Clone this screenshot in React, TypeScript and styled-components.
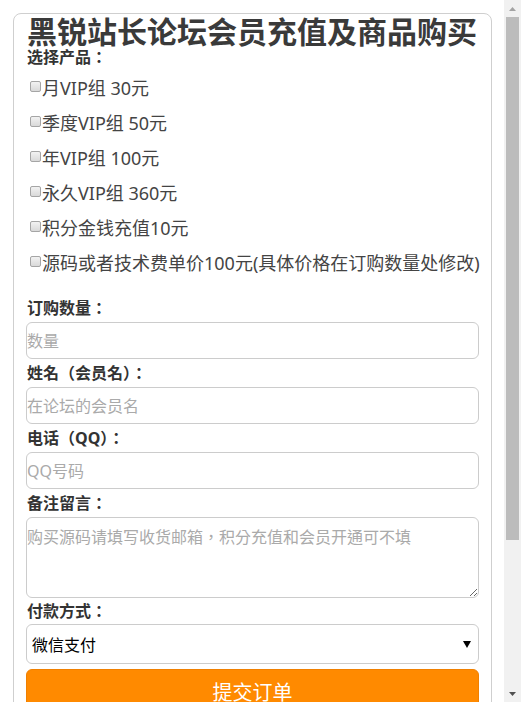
import React from "react";
import styled, { createGlobalStyle } from "styled-components";

const Global = createGlobalStyle`
  html, body { margin: 0; padding: 0; background: #fff; }
  body {
    font-family: "Noto Sans", "Noto Sans CJK SC", sans-serif;
    color: #333;
  }
`;

const Page = styled.div`
  padding: 13px 0 190px 13px;
`;

const Card = styled.form`
  width: 453px;
  border: 1px solid #cfcfcf;
  border-radius: 8px;
  padding: 0 12px 20px 12px;
  display: flex;
  flex-direction: column;
`;

const Title = styled.h1`
  margin: 0;
  font-size: 30px;
  line-height: 32px;
  font-weight: bold;
  color: #3a3a3a;
  font-family: "Noto Sans CJK SC", sans-serif;
  white-space: nowrap;
  padding-left: 1px;
`;

const Label = styled.div<{ $h?: number }>`
  font-size: 16px;
  font-weight: bold;
  color: #333;
  line-height: ${(p) => p.$h ?? 28}px;
  height: ${(p) => p.$h ?? 28}px;
  padding-left: 1px;
  font-family: "Noto Sans", "Noto Sans CJK TC", sans-serif;
`;

const Options = styled.div`
  display: flex;
  flex-direction: column;
  margin-top: 1px;
  margin-bottom: 15px;
`;

const Option = styled.label`
  display: flex;
  align-items: center;
  height: 35px;
  font-size: 18px;
  color: #444;
  white-space: nowrap;
`;

const Check = styled.input`
  appearance: none;
  width: 11px;
  height: 11px;
  margin: 0 1px 0 4px;
  border: 1px solid #a5a5a5;
  border-radius: 2px;
  background: linear-gradient(#f2f2f2, #d9d9d9);
  flex: none;
`;

const TextInput = styled.input`
  box-sizing: border-box;
  width: 453px;
  height: 37px;
  border: 1px solid #cccccc;
  border-radius: 6px;
  padding: 0;
  font-size: 16px;
  font-family: "Noto Sans", "Noto Sans CJK SC", sans-serif;
  color: #333;
  outline: none;
  &::placeholder { color: #aaaaaa; }
`;

const TextArea = styled.textarea`
  box-sizing: border-box;
  width: 453px;
  height: 81px;
  border: 1px solid #cccccc;
  border-radius: 6px;
  padding: 8px 0 0 0;
  font-size: 16px;
  line-height: 22px;
  font-family: "Noto Sans", "Noto Sans CJK TC", sans-serif;
  resize: vertical;
  outline: none;
  display: block;
  &::placeholder { color: #aaaaaa; }
`;

const SelectWrap = styled.div`
  position: relative;
  width: 453px;
`;

const Select = styled.select`
  appearance: none;
  box-sizing: border-box;
  width: 453px;
  height: 40px;
  border: 1px solid #cccccc;
  border-radius: 6px;
  padding: 0 0 0 5px;
  font-size: 16px;
  font-family: "Noto Sans CJK SC", sans-serif;
  color: #000;
  background: #fff;
  outline: none;
  display: block;
`;

const Arrow = styled.svg`
  position: absolute;
  right: 8px;
  top: 17px;
  pointer-events: none;
`;

const Submit = styled.button`
  margin-top: 5px;
  width: 453px;
  height: 44px;
  border: 1px solid #f08000;
  border-radius: 6px;
  background: #ff8a00;
  color: #fff;
  font-size: 20px;
  font-family: "Noto Sans CJK SC", sans-serif;
  padding: 0;
`;

/* fake browser scrollbar overlay */
const ScrollBar = styled.div`
  position: fixed;
  top: 0;
  right: 0;
  width: 17px;
  height: 702px;
  background: #f1f1f1;
  display: flex;
  flex-direction: column;
`;

const ScrollButton = styled.div`
  height: 17px;
  flex: none;
  display: flex;
  align-items: center;
  justify-content: center;
`;

const Thumb = styled.div`
  height: 523px;
  margin: 0 2px;
  background: #bcbcbc;
  flex: none;
`;

const Spacer = styled.div`
  flex: 1;
`;

const options = [
  "月VIP组 30元",
  "季度VIP组 50元",
  "年VIP组 100元",
  "永久VIP组 360元",
  "积分金钱充值10元",
  "源码或者技术费单价100元(具体价格在订购数量处修改)",
];

export default function App() {
  return (
    <>
      <Global />
      <Page>
        <Card onSubmit={(e) => e.preventDefault()}>
          <Title>黑锐站长论坛会员充值及商品购买</Title>
          <Label $h={22}>选择产品：</Label>
          <Options>
            {options.map((o) => (
              <Option key={o}>
                <Check type="checkbox" />
                {o}
              </Option>
            ))}
          </Options>
          <Label>订购数量：</Label>
          <TextInput placeholder="数量" />
          <Label>姓名（会员名）：</Label>
          <TextInput placeholder="在论坛的会员名" />
          <Label>电话（QQ）：</Label>
          <TextInput placeholder="QQ号码" />
          <Label>备注留言：</Label>
          <TextArea placeholder="购买源码请填写收货邮箱，积分充值和会员开通可不填" />
          <Label $h={26}>付款方式：</Label>
          <SelectWrap>
            <Select defaultValue="wx">
              <option value="wx">微信支付</option>
              <option value="ali">支付宝</option>
            </Select>
            <Arrow width="8" height="7" viewBox="0 0 8 7">
              <path d="M0 0 L8 0 L4 7 Z" fill="#000" />
            </Arrow>
          </SelectWrap>
          <Submit type="submit">提交订单</Submit>
        </Card>
      </Page>
      <ScrollBar aria-hidden="true">
        <ScrollButton>
          <svg width="7" height="4" viewBox="0 0 7 4">
            <path d="M0 4 L3.5 0 L7 4 Z" fill="#a3a3a3" />
          </svg>
        </ScrollButton>
        <Thumb />
        <Spacer />
        <ScrollButton>
          <svg width="7" height="4" viewBox="0 0 7 4">
            <path d="M0 0 L3.5 4 L7 0 Z" fill="#505050" />
          </svg>
        </ScrollButton>
      </ScrollBar>
    </>
  );
}
